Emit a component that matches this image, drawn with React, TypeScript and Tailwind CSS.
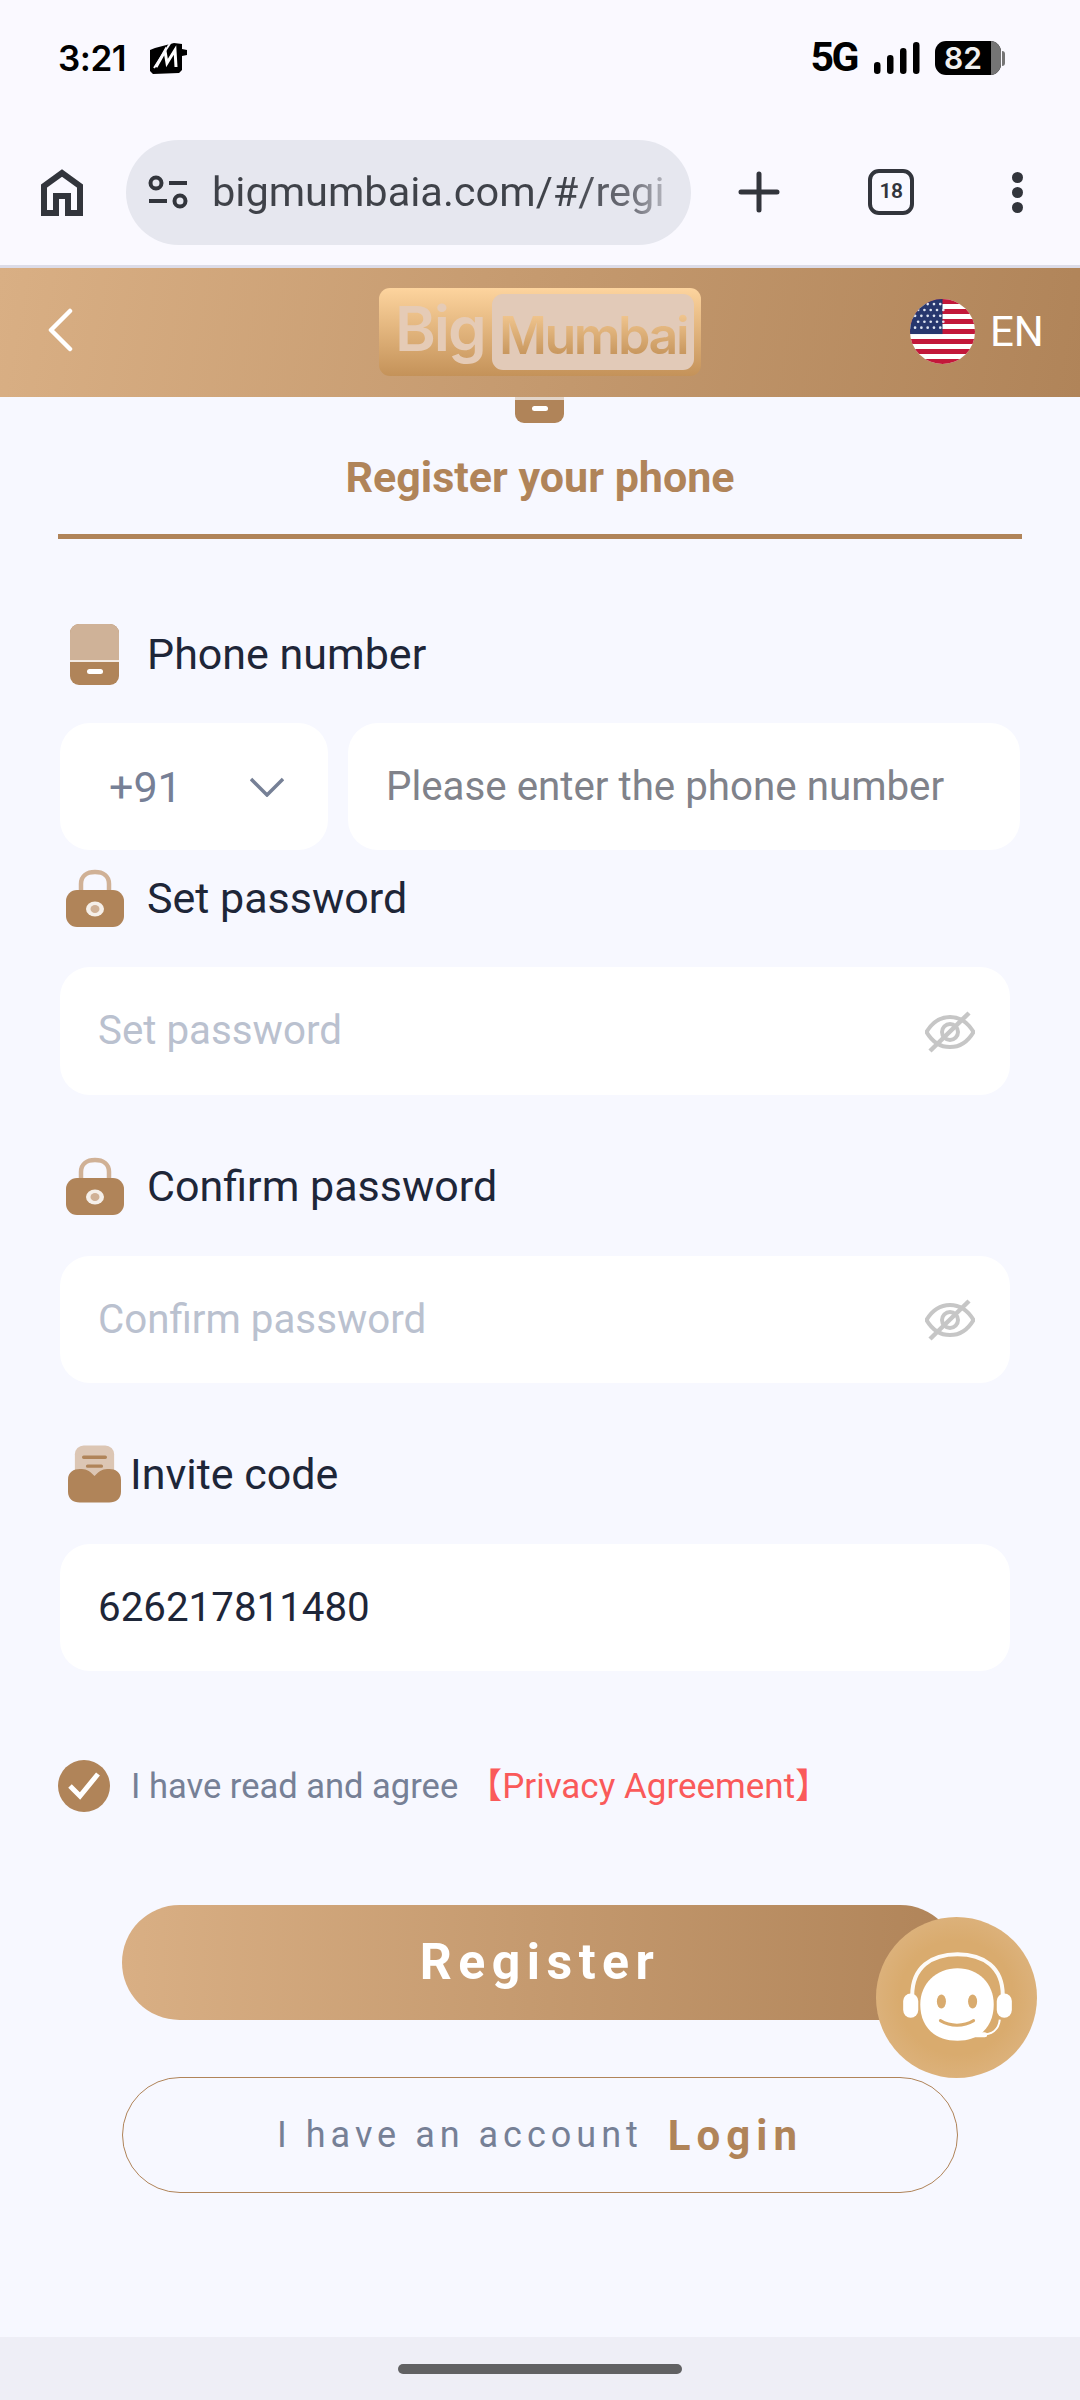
import React from "react";

const Lock = () => (
  <svg viewBox="0 0 58 60" className="w-[58px] h-[60px]">
    <path d="M15 25V16C15 8 21 4 29 4s14 4 14 12v9" fill="none" stroke="#d0b196" strokeWidth="4.500" />
    <rect x="0" y="22" width="58" height="37" rx="11" fill="#b08459" />
    <ellipse cx="29" cy="41" rx="9" ry="7.500" fill="#f5efe9" />
    <ellipse cx="29" cy="41" rx="4.500" ry="4" fill="#d0b196" />
  </svg>
);

const EyeOff = () => (
  <svg viewBox="0 0 50 42" className="w-[50px] h-[42px]" fill="none" stroke="#c6c6c6" strokeWidth="4">
    <path d="M1.500 21C8 10 16 6 25 6s17 4 23.500 15C42 32 34 36 25 36S8 32 1.500 21Z" />
    <circle cx="25" cy="21" r="8" />
    <path d="M44 2 5 40" strokeWidth="4.500" />
  </svg>
);

const Label = ({ icon, children, gap }: { icon: React.ReactNode; children: React.ReactNode; gap: string }) => (
  <div className={`flex items-center h-[60px] text-[43px] text-[#1e2638] ${gap}`}>
    {icon}
    <span className="pt-[1px]">{children}</span>
  </div>
);

const Flag = () => {
  const stripes = [0, 2, 4, 6, 8, 10, 12];
  const dots: [number, number][] = [];
  for (let r = 0; r < 5; r++) for (let c = 0; c < 5; c++) dots.push([5 + c * 6.2 + (r % 2 ? 3 : 0), 5 + r * 5.800]);
  return (
    <svg viewBox="0 0 64 64" className="w-[65px] h-[65px] rounded-full">
      <rect width="64" height="64" fill="#fff" />
      {stripes.map((s) => (
        <rect key={s} x="0" y={(s * 64) / 13} width="64" height={64 / 13} fill="#c2183a" />
      ))}
      <rect width="32" height="34.500" fill="#27376e" />
      {dots.map(([x, y], i) => (
        <circle key={i} cx={x} cy={y} r="1.300" fill="#dfe5f2" />
      ))}
    </svg>
  );
};

export default function App() {
  return (
    <div className="relative w-[1080px] h-[2400px] overflow-hidden flex flex-col bg-[#f7f8ff] font-['Roboto',sans-serif]">
      {/* Status bar */}
      <div className="bg-[#faf9ff]">
        <div className="flex items-center justify-between h-[116px] pl-[58px] pr-[75px] text-black">
          <div className="flex items-center gap-[23px]">
            <span className="text-[35px] font-semibold font-['Inter',sans-serif] tracking-[-0.5px]">3:21</span>
            <svg viewBox="0 0 38 32" className="w-[38px] h-[32px]">
              <path d="M6 6 25 1l8 1v5l5 1v5l-5 1v14l-3 3-26 1-3-3V8Z" fill="#000" />
              <path d="M7 25 16 9l2 12 8-13 1 17" fill="none" stroke="#fff" strokeWidth="3" />
              <path d="M5 26 22 0" stroke="#faf9ff" strokeWidth="2" />
            </svg>
          </div>
          <div className="flex items-center">
            <span className="text-[41px] font-bold tracking-[-2.500px]">5G</span>
            <svg viewBox="0 0 46 32" className="w-[46px] h-[32px] ml-[17px]">
              <rect x="0" y="20" width="6.500" height="12" rx="3.200" fill="#000" />
              <rect x="13" y="13" width="6.500" height="19" rx="3.200" fill="#000" />
              <rect x="26" y="6" width="6.500" height="26" rx="3.200" fill="#000" />
              <rect x="39" y="0" width="6.500" height="32" rx="3.200" fill="#000" />
            </svg>
            <div className="ml-[15px] flex items-center">
              <div className="w-[66px] h-[34px] rounded-[11px] overflow-hidden flex bg-black">
                <div className="flex-1 flex items-center justify-center text-[30px] font-semibold text-[#f0f0f0] font-['Inter',sans-serif]">82</div>
                <div className="w-[10px] bg-[#757575]" />
              </div>
              <div className="w-[3px] h-[15px] ml-[1px] rounded-r-sm bg-[#757575]" />
            </div>
          </div>
        </div>
        {/* Browser toolbar */}
        <div className="flex items-center h-[149px] pt-[3px] pl-[41px] text-[#32353c]">
          <svg viewBox="0 0 42 47" className="w-[42px] h-[47px]" fill="none" stroke="#32353c" strokeWidth="6">
            <path d="M3 44V17L21 4l18 13v27H27V27H15v17Z" />
          </svg>
          <div className="ml-[43px] w-[565px] h-[105px] rounded-full bg-[#e6e7ef] flex items-center pl-[22px]">
            <svg viewBox="0 0 40 34" className="w-[40px] h-[34px] shrink-0" fill="none" stroke="#32353c" strokeWidth="4">
              <circle cx="8" cy="8" r="5.500" />
              <circle cx="32" cy="26" r="5.500" />
              <path d="M21 8h18M1 26h18" />
            </svg>
            <span className="ml-[24px] whitespace-nowrap text-[41.5px] text-transparent bg-clip-text bg-[linear-gradient(90deg,#3f4249_78%,#70717a_93%,#b4b5bd_100%)]">
              bigmumbaia.com/#/regi
            </span>
          </div>
          <svg viewBox="0 0 42 42" className="ml-[47px] w-[42px] h-[42px]" fill="none" stroke="#32353c" strokeWidth="5" strokeLinecap="round">
            <path d="M21 3v36M3 21h36" />
          </svg>
          <div className="ml-[88px] w-[46px] h-[46px] rounded-[11px] border-[4px] border-[#32353c] flex items-center justify-center text-[21px] font-semibold tracking-[-0.5px]">
            18
          </div>
          <div className="ml-[96px] w-[14px] flex flex-col gap-[4px] items-center">
            <div className="w-[11px] h-[11px] rounded-full bg-[#32353c]" />
            <div className="w-[11px] h-[11px] rounded-full bg-[#32353c]" />
            <div className="w-[11px] h-[11px] rounded-full bg-[#32353c]" />
          </div>
        </div>
        <div className="h-[3px] bg-[#dcdce8]" />
      </div>

      {/* App header */}
      <div className="h-[129px] flex items-center bg-[linear-gradient(100deg,#d9af84,#b08459)] pl-[48px]">
        <svg viewBox="0 0 26 46" className="w-[26px] h-[46px] mb-[6px]" fill="none" stroke="#fff" strokeWidth="4.500" strokeLinecap="round" strokeLinejoin="round">
          <path d="M22 4 3 23l19 19" />
        </svg>
        <div className="ml-[305px] mb-[2px] w-[322px] h-[88px] rounded-[11px] bg-[linear-gradient(180deg,#fdd49e,#c49259)] flex items-center pl-[16px] pr-[7px]">
          <span className="w-[84px] text-[62px] leading-none font-semibold text-[#e5cbb6] font-['Inter',sans-serif] tracking-[-2px] pb-[6px]">Big</span>
          <div className="ml-[13px] flex-1 h-[76px] rounded-[11px] bg-[#e2cab8] flex items-center justify-center overflow-hidden">
            <span className="text-[52px] leading-none font-semibold text-transparent bg-clip-text bg-[linear-gradient(180deg,#fdd49e,#c08e55)] font-['Inter',sans-serif] tracking-[-2.500px] pt-[8px]">Mumbai</span>
          </div>
        </div>
        <div className="ml-[209px] mb-[2px]">
          <Flag />
        </div>
        <span className="ml-[15px] mb-[2px] text-[42px] text-white">EN</span>
      </div>

      {/* Form */}
      <div className="flex-1 flex flex-col">
        <div className="ml-[515px] w-[49px] h-[26px] rounded-b-[9px] overflow-hidden bg-[#b08459] flex flex-col items-center">
          <div className="w-full h-[3px] bg-[#e3d5c9]" />
          <div className="mt-[6px] w-[16px] h-[5px] rounded-full bg-white" />
        </div>
        <div className="mt-[24px] h-[60px] flex items-center justify-center text-[43px] font-bold text-[#b08459]">
          Register your phone
        </div>
        <div className="mt-[27px] ml-[58px] w-[964px] h-[5px] bg-[#b08459]" />

        <div className="mt-[85px] ml-[70px]">
          <Label
            gap="gap-[28px]"
            icon={
              <div className="w-[49px] h-[61px] rounded-[9px] overflow-hidden flex flex-col bg-[#b08459]">
                <div className="h-[36px] bg-[#cfb298]" />
                <div className="h-[2px] bg-[#f3ebe4]" />
                <div className="mt-[7px] mx-auto w-[16px] h-[5px] rounded-full bg-white" />
              </div>
            }
          >
            Phone number
          </Label>
        </div>
        <div className="mt-[39px] ml-[60px] flex gap-[20px]">
          <div className="w-[268px] h-[127px] rounded-[30px] bg-white flex items-center pl-[49px] pr-[44px] justify-between text-[43px] text-[#768096]">
            <span className="pt-[1px]">+91</span>
            <svg viewBox="0 0 34 20" className="w-[34px] h-[20px]" fill="none" stroke="#768096" strokeWidth="3.500">
              <path d="M1 2l16 16L33 2" />
            </svg>
          </div>
          <div className="w-[672px] h-[127px] rounded-[30px] bg-white flex items-center pl-[38px] pt-[1px] text-[40.3px] text-[#80828a]">
            Please enter the phone number
          </div>
        </div>

        <div className="mt-[18px] ml-[66px]">
          <Label gap="gap-[23px]" icon={<Lock />}>Set password</Label>
        </div>
        <div className="mt-[39px] ml-[60px] w-[950px] h-[128px] rounded-[30px] bg-white flex items-center justify-between pl-[38px] pr-[35px] pt-[1px] text-[40.3px] text-[#bac1cf]">
          <span>Set password</span>
          <EyeOff />
        </div>

        <div className="mt-[61px] ml-[66px]">
          <Label gap="gap-[23px]" icon={<Lock />}>Confirm password</Label>
        </div>
        <div className="mt-[40px] ml-[60px] w-[950px] h-[127px] rounded-[30px] bg-white flex items-center justify-between pl-[38px] pr-[35px] pt-[1px] text-[40.3px] text-[#bac1cf]">
          <span>Confirm password</span>
          <EyeOff />
        </div>

        <div className="mt-[61px] ml-[68px]">
          <Label
            gap="gap-[9px]"
            icon={
              <svg viewBox="0 0 54 60" className="w-[53px] h-[60px]">
                <rect x="7" y="1" width="40" height="50" rx="9" fill="#dcc6b4" />
                <path d="M16 13h22M20 22h14" stroke="#b08459" strokeWidth="3.500" strokeLinecap="round" />
                <path d="M0 36c0-8 6-11 12-11 6 0 9 1 15 7 6-6 9-7 15-7 6 0 12 3 12 11v12c0 7-5 11-12 11H12C5 59 0 55 0 48Z" fill="#b08459" />
              </svg>
            }
          >
            Invite code
          </Label>
        </div>
        <div className="mt-[40px] ml-[60px] w-[950px] h-[127px] rounded-[30px] bg-white flex items-center pl-[38px] pt-[1px] text-[40.3px] text-[#1e2638]">
          626217811480
        </div>

        <div className="mt-[89px] ml-[58px] h-[52px] flex items-center">
          <div className="w-[52px] h-[52px] rounded-full bg-[#b08459] flex items-center justify-center">
            <svg viewBox="0 0 34 30" className="w-[34px] h-[30px]" fill="none" stroke="#fff" strokeWidth="5">
              <path d="M3 15l10 10L31 3" />
            </svg>
          </div>
          <span className="ml-[21px] pt-[2px] text-[34.5px] text-[#768096]">I have read and agree</span>
          <span className="ml-[9px] pt-[2px] text-[35px] text-[#fa5a5a] font-['Roboto','Noto_Sans_CJK_SC',sans-serif]">【Privacy Agreement】</span>
        </div>

        <div className="mt-[93px] ml-[122px] w-[836px] h-[115px] rounded-full bg-[linear-gradient(90deg,#d9af84,#b08459)] flex items-center justify-center text-[50px] font-bold text-white tracking-[6.500px]">
          Register
        </div>
        <div className="mt-[57px] ml-[122px] w-[836px] h-[116px] rounded-full border-[1.500px] border-[#b08459] flex items-center justify-center">
          <span className="text-[36px] tracking-[5px] text-[#768096]">I have an account</span>
          <span className="ml-[25px] text-[42px] font-bold tracking-[6px] text-[#b08459]">Login</span>
        </div>
      </div>

      {/* Gesture bar */}
      <div className="h-[63px] bg-[#eeeef6] flex justify-center pt-[27px]">
        <div className="w-[284px] h-[10px] rounded-full bg-[#616163]" />
      </div>

      {/* Floating support button */}
      <div className="absolute left-[876px] top-[1917px] w-[161px] h-[161px] rounded-full bg-[radial-gradient(circle,#d9ab6e_50%,#e0ba8c_100%)]">
        <svg viewBox="0 0 160 160" className="w-full h-full">
          <path d="M36 78C36 50 55 37 81 37s45 13 45 41" fill="none" stroke="#fff" strokeWidth="4" opacity="0.95" />
          <rect x="27" y="76" width="15" height="24" rx="7.500" fill="#fff" />
          <rect x="120" y="76" width="15" height="24" rx="7.500" fill="#fff" />
          <path d="M81 51c21 0 36 15 36 36 0 22-14 36-36 36-23 0-37-14-37-36 0-21 16-36 37-36Z" fill="#fff" />
          <ellipse cx="65" cy="84" rx="4.500" ry="7" fill="#d9ab6e" />
          <ellipse cx="96" cy="84" rx="4.500" ry="7" fill="#d9ab6e" />
          <path d="M64 103c10 6 23 6 33 0" fill="none" stroke="#d9ab6e" strokeWidth="3" strokeLinecap="round" />
          <path d="M123 102c-1 10-8 15-18 15" fill="none" stroke="#fff" strokeWidth="2" />
          <path d="M88 117h20" stroke="#fff" strokeWidth="5" strokeLinecap="round" />
        </svg>
      </div>
    </div>
  );
}
